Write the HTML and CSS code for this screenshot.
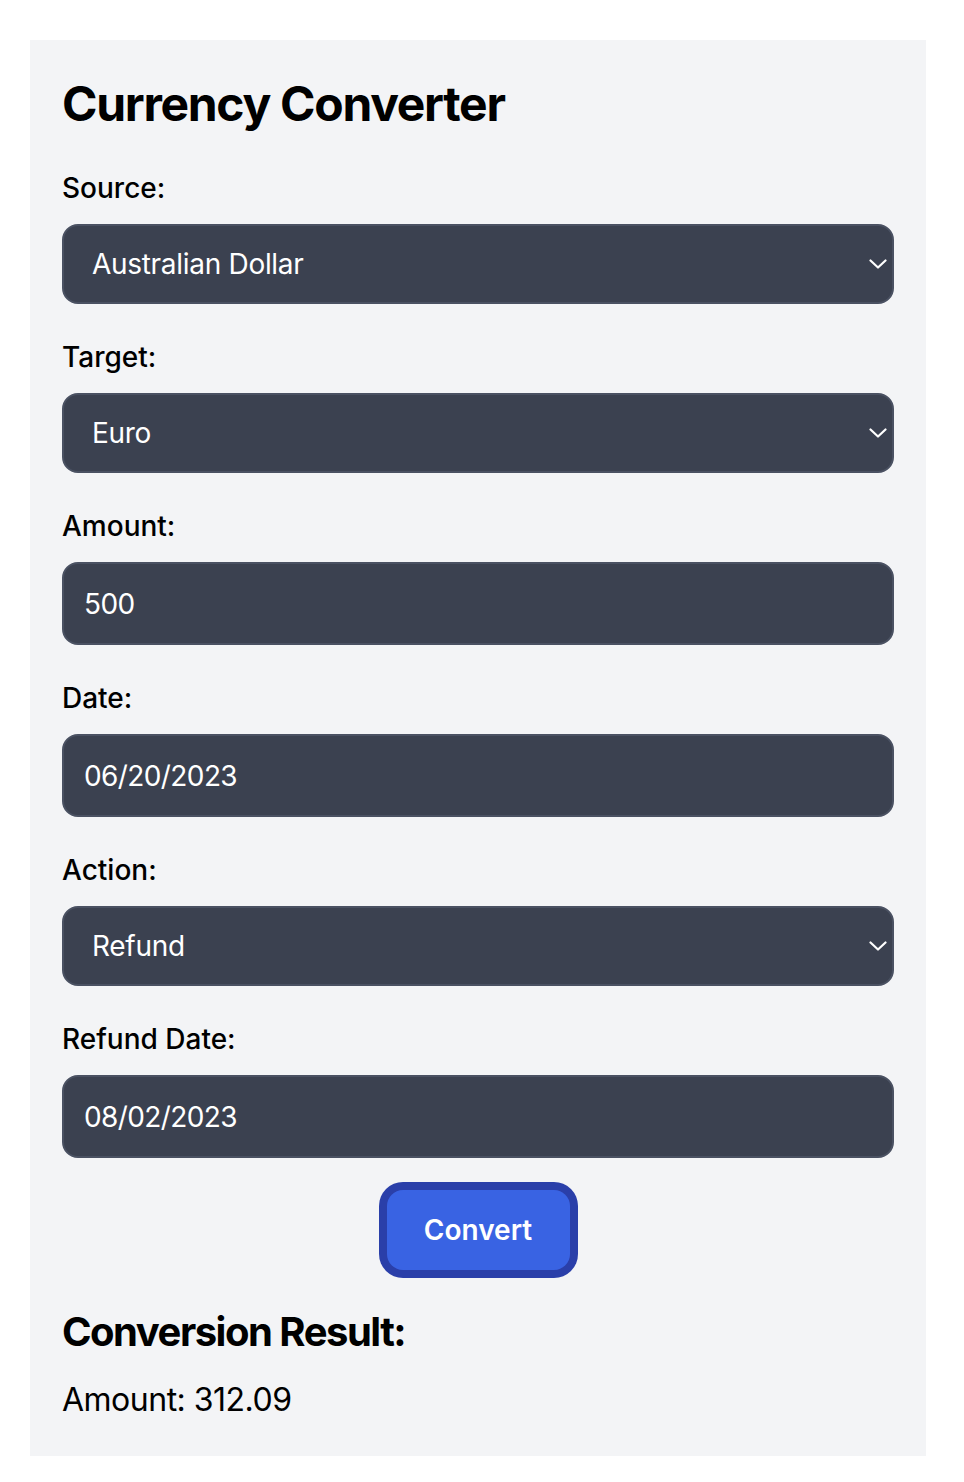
FILE: index.html
```html
<!DOCTYPE html>
<html lang="en">
<head>
<meta charset="utf-8">
<title>Currency Converter</title>
<link rel="stylesheet" href="styles.css">
</head>
<body>
<main class="card">
  <h1 class="title">Currency Converter</h1>
  <form class="form">
    <div class="field">
      <label class="label" for="source">Source:</label>
      <div class="select-wrap">
        <select id="source" class="control select"><option>Australian Dollar</option></select>
        <svg class="chevron" viewBox="0 0 18 10" width="18" height="10"><path d="M1.5 1.5 L9 8.5 L16.5 1.5" fill="none" stroke="#fff" stroke-width="2.2" stroke-linecap="round" stroke-linejoin="round"/></svg>
      </div>
    </div>
    <div class="field">
      <label class="label" for="target">Target:</label>
      <div class="select-wrap">
        <select id="target" class="control select"><option>Euro</option></select>
        <svg class="chevron" viewBox="0 0 18 10" width="18" height="10"><path d="M1.5 1.5 L9 8.5 L16.5 1.5" fill="none" stroke="#fff" stroke-width="2.2" stroke-linecap="round" stroke-linejoin="round"/></svg>
      </div>
    </div>
    <div class="field">
      <label class="label" for="amount">Amount:</label>
      <input id="amount" class="control input" type="text" value="500">
    </div>
    <div class="field">
      <label class="label" for="date">Date:</label>
      <input id="date" class="control input" type="text" value="06/20/2023">
    </div>
    <div class="field">
      <label class="label" for="action">Action:</label>
      <div class="select-wrap">
        <select id="action" class="control select"><option>Refund</option></select>
        <svg class="chevron" viewBox="0 0 18 10" width="18" height="10"><path d="M1.5 1.5 L9 8.5 L16.5 1.5" fill="none" stroke="#fff" stroke-width="2.2" stroke-linecap="round" stroke-linejoin="round"/></svg>
      </div>
    </div>
    <div class="field field-last">
      <label class="label" for="refund">Refund Date:</label>
      <input id="refund" class="control input" type="text" value="08/02/2023">
    </div>
    <div class="actions">
      <button type="button" class="button">Convert</button>
    </div>
  </form>
  <h2 class="result-title">Conversion Result:</h2>
  <p class="result">Amount: 312.09</p>
</main>
</body>
</html>
```
FILE: styles.css
```css
* { box-sizing: border-box; }
html, body { margin: 0; padding: 0; background: #ffffff; }
body {
  font-family: Inter, "Noto Sans", "Liberation Sans", sans-serif;
  color: #000;
}
.card {
  width: 896px;
  margin: 40px 0 0 30px;
  padding: 32px 32px 32px;
  background: #f3f4f6;
}
.title {
  margin: 0 0 32px;
  font-size: 48px;
  line-height: 64px;
  font-weight: 700;
  letter-spacing: -1.3px;
}
.form { display: flex; flex-direction: column; }
.field { display: flex; flex-direction: column; margin-bottom: 33px; }
.field-last { margin-bottom: 0; }
.label {
  font-size: 28px;
  line-height: 40px;
  font-weight: 500;
  margin-bottom: 16px;
}
.select-wrap { position: relative; }
.control {
  display: block;
  width: 100%;
  background: #3b4150;
  color: #fff;
  border: 2px solid #4a5162;
  border-radius: 16px;
  font-family: inherit;
  font-size: 28px;
  outline: none;
  margin: 0;
}
.select {
  height: 80px;
  padding: 0 60px 0 28px;
  letter-spacing: -0.3px;
  -webkit-appearance: none;
  appearance: none;
}
.input {
  height: 83px;
  padding: 0 20px;
  letter-spacing: -0.6px;
}
.chevron {
  position: absolute;
  right: 7px;
  top: 35px;
  pointer-events: none;
}
.actions { display: flex; justify-content: center; margin-top: 32px; }
.button {
  height: 80px;
  width: 183px;
  border: none;
  border-radius: 16px;
  background: #3963e3;
  color: #fff;
  font-family: inherit;
  font-size: 28px;
  font-weight: 600;
  box-shadow: 0 0 0 8px #2a3fa9;
}
.result-title {
  margin: 34px 0 16px;
  font-size: 40px;
  line-height: 56px;
  font-weight: 700;
  letter-spacing: -1.5px;
}
.result {
  margin: 0;
  font-size: 32px;
  line-height: 48px;
  letter-spacing: -0.5px;
}
```
